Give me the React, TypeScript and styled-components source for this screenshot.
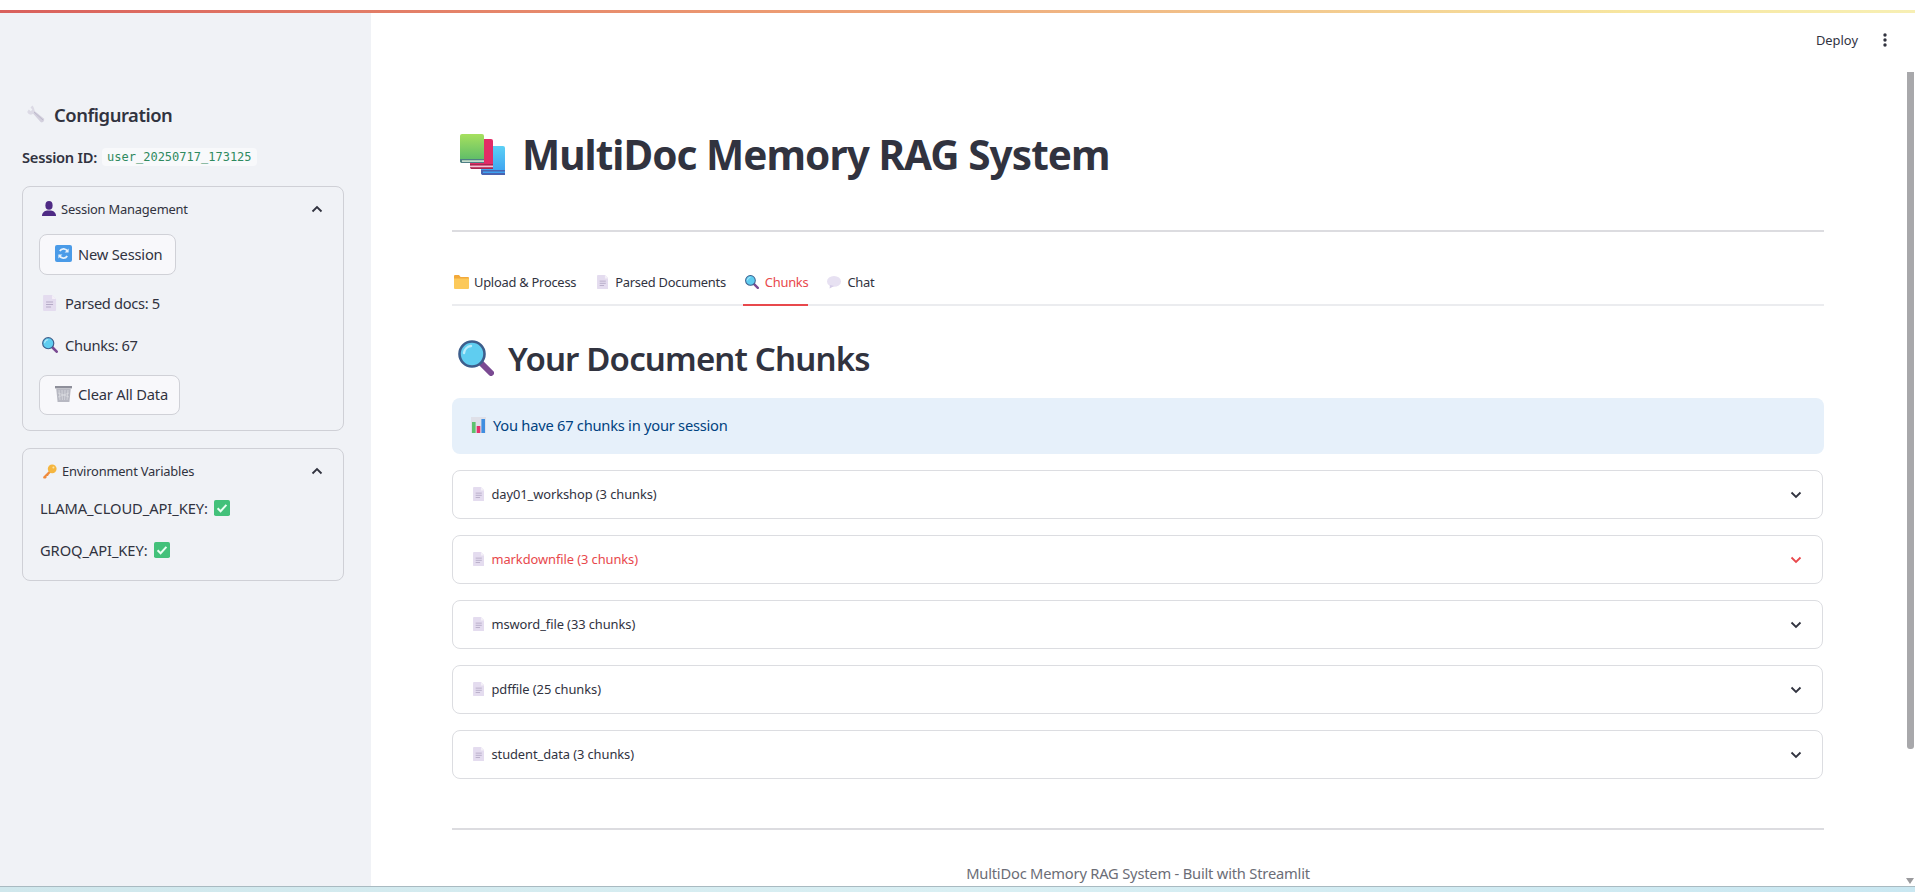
import React from "react";
import styled, { createGlobalStyle } from "styled-components";

const FONT = `"Noto Sans", "Lato", sans-serif`;

const Global = createGlobalStyle`
  html, body { margin: 0; padding: 0; height: 100%; overflow: hidden; background: #fff; }
  body { font-family: ${FONT}; color: #31333f; }
  * { box-sizing: border-box; }
`;

const Root = styled.div`
  height: 892px;
  display: flex;
  flex-direction: column;
  overflow: hidden;
`;
const TopGap = styled.div`height: 10px; background: #fff; flex: none;`;
const Decoration = styled.div`
  height: 3px;
  flex: none;
  background: linear-gradient(90deg, #d9605c 0%, #ec9a72 40%, #f7e6a0 85%, #f7efb4 100%);
`;
const Body = styled.div`flex: 1; display: flex; min-height: 0; position: relative;`;
const BottomStrip = styled.div`
  height: 6px;
  flex: none;
  border-top: 1px solid #a9bac1;
  background: linear-gradient(90deg, #cfe7ec, #d9eff3 50%, #c9e7f1);
`;

const Sidebar = styled.aside`
  width: 371px;
  flex: none;
  background: #f0f2f6;
  padding: 85px 27px 0 22px;
`;
const ConfigHeading = styled.h3`
  margin: 0;
  height: 32px;
  display: flex;
  align-items: center;
  gap: 8px;
  padding-left: 5px;
  font-size: 18.4px;
  font-weight: 600;
  letter-spacing: -0.45px;
  color: #31333f;
`;
const SessionRow = styled.div`
  margin-top: 17px;
  height: 20px;
  display: flex;
  align-items: center;
  gap: 5px;
  font-size: 14.7px;
  font-weight: 600;
  letter-spacing: -0.25px;
`;
const Code = styled.code`
  font-family: "DejaVu Sans Mono", monospace;
  font-size: 12px;
  font-weight: 400;
  letter-spacing: 0;
  color: #2f8a5f;
  background: #f8f9fb;
  border-radius: 4px;
  padding: 2px 5px;
`;
const Box = styled.section<{ $top: number; $bottom: number }>`
  margin-top: ${(p) => p.$top}px;
  width: 322px;
  border: 1px solid #cfd0d6;
  border-radius: 8px;
  padding: 0 16px ${(p) => p.$bottom}px;
`;
const BoxHeader = styled.div<{ $h: number }>`
  height: ${(p) => p.$h}px;
  margin: 0 -1px 0 3px;
  padding: 0 5px 2px 0;
  display: flex;
  align-items: center;
  gap: 5px;
  font-size: 12.9px;
  letter-spacing: -0.2px;
  color: #31333f;
`;
const Grow = styled.span`flex: 1;`;
const Button = styled.div<{ $w: number; $h: number; $top: number }>`
  margin-top: ${(p) => p.$top}px;
  width: ${(p) => p.$w}px;
  height: ${(p) => p.$h}px;
  display: flex;
  align-items: center;
  gap: 6px;
  padding: 0 0 2px 15px;
  border: 1px solid #d0d1d7;
  border-radius: 8px;
  background: #f8f8fb;
  font-size: 14.7px;
  letter-spacing: -0.2px;
  color: #31333f;
`;
const Para = styled.div<{ $top: number; $indent?: number; $ls?: number }>`
  margin-top: ${(p) => p.$top}px;
  height: 24px;
  display: flex;
  align-items: center;
  gap: 6px;
  padding: 0 0 2px ${(p) => p.$indent ?? 0}px;
  font-size: 14.7px;
  letter-spacing: ${(p) => p.$ls ?? 0}px;
  color: #31333f;
`;
const Slot = styled.span`
  flex: none;
  width: 18px;
  display: flex;
  align-items: center;
  justify-content: center;
`;

const Main = styled.main`
  flex: 1;
  min-width: 0;
  padding: 0 91px 0 81px;
  overflow: hidden;
`;
const Toolbar = styled.div`
  height: 54px;
  margin-right: -91px;
  padding-right: 28px;
  display: flex;
  align-items: center;
  justify-content: flex-end;
  gap: 25px;
  font-size: 12.9px;
  color: #31333f;
`;
const Title = styled.h1`
  margin: 57px 0 0;
  height: 60px;
  padding-left: 8px;
  display: flex;
  align-items: center;
  gap: 17px;
  font-size: 40.5px;
  font-weight: 700;
  letter-spacing: -0.95px;
  color: #31333f;
`;
const Rule = styled.hr<{ $top: number }>`
  margin: ${(p) => p.$top}px 0 0;
  border: 0;
  height: 2px;
  background: #dcdce0;
`;
const TabList = styled.div`
  margin-top: 34px;
  height: 40px;
  display: flex;
  gap: 17px;
  border-bottom: 2px solid #ebecef;
`;
const Tab = styled.div<{ $active?: boolean }>`
  height: 40px;
  padding-bottom: 6px;
  display: flex;
  align-items: center;
  gap: 4px;
  font-size: 12.9px;
  letter-spacing: -0.25px;
  color: ${(p) => (p.$active ? "#e8484c" : "#31333f")};
  border-bottom: 2px solid ${(p) => (p.$active ? "#e8484c" : "transparent")};
`;
const Heading = styled.h2`
  margin: 27px 0 0;
  height: 50px;
  padding-left: 6px;
  display: flex;
  align-items: center;
  gap: 14px;
  font-size: 33px;
  font-weight: 600;
  letter-spacing: -0.85px;
  color: #31333f;
`;
const Info = styled.div`
  margin-top: 15px;
  height: 56px;
  padding: 0 0 2px 19px;
  display: flex;
  align-items: center;
  gap: 7px;
  border-radius: 8px;
  background: #e6f0fa;
  color: #004280;
  font-size: 14.7px;
  letter-spacing: -0.25px;
`;
const ExpanderList = styled.div`
  margin-top: 16px;
  display: flex;
  flex-direction: column;
  gap: 16px;
`;
const Expander = styled.div<{ $hot?: boolean }>`
  height: 49px;
  margin-right: 1px;
  padding: 0 20px 2px 20px;
  display: flex;
  align-items: center;
  gap: 7px;
  border: 1px solid #dcdde1;
  border-radius: 8px;
  font-size: 12.9px;
  letter-spacing: -0.08px;
  color: ${(p) => (p.$hot ? "#e8484c" : "#31333f")};
`;
const ExpanderChevron = styled.span`
  display: flex;
  margin-bottom: -2px;
`;
const Footer = styled.div`
  margin-top: 31px;
  height: 24px;
  line-height: 24px;
  text-align: center;
  font-size: 14.7px;
  letter-spacing: -0.2px;
  color: #6b6d76;
`;
const ScrollThumb = styled.div`
  position: absolute;
  right: 1px;
  top: 59px;
  width: 7px;
  height: 677px;
  background: #a8a8ab;
  border-radius: 0 0 3px 3px;
`;
const ScrollArrow = styled.div`
  position: absolute;
  right: 1px;
  bottom: 2px;
  width: 0;
  height: 0;
  border-left: 4px solid transparent;
  border-right: 4px solid transparent;
  border-top: 6px solid #9a9a9d;
`;
const Svg = styled.svg`flex: none; display: block;`;

type IP = { s?: number };
const Doc = ({ s = 16 }: IP) => (
  <Svg width={s * 0.82} height={s} viewBox="0 0 13 16">
    <path d="M1 0h8l4 4v11a1 1 0 0 1-1 1H1a1 1 0 0 1-1-1V1a1 1 0 0 1 1-1z" fill="#e4dcef" />
    <path d="M9 0l4 4H9z" fill="#f4f0f8" />
    <path d="M3 7h7M3 9.5h7M3 12h5" stroke="#b5aac6" strokeWidth="1" />
  </Svg>
);
const Mag = ({ s = 16 }: IP) => (
  <Svg width={s} height={s} viewBox="0 0 36 36">
    <path d="M22 22l11 11" stroke="#7a4a92" strokeWidth="6" strokeLinecap="round" />
    <circle cx="14" cy="14" r="12.5" fill="#5fcdf0" stroke="#3d5e8c" strokeWidth="2.6" />
    <path d="M6 13a8 8 0 0 1 7-7" stroke="#b9ecfb" strokeWidth="2.4" fill="none" strokeLinecap="round" />
  </Svg>
);
const Wrench = () => (
  <Svg width={19} height={19} viewBox="0 0 19 19">
    <path d="M6.6 5.2L16.8 13.6a2.4 2.4 0 0 1-3.2 3.4L4.9 7.2z" fill="#d3d0dd" />
    <path d="M5.4 0.4L3.5 2.6l1.9 2-1.6 1.6-2-1.8L0.4 6.6c-.1 1.2.9 2.6 2.5 3 1.3.3 2.6-.1 3.6-1 1-1 1.4-2.4 1-3.7C7.1 3 6.2 1 5.4.4z" fill="#dcdae5" />
    <path d="M7 7l9 8" stroke="#bdb9cc" strokeWidth="1" />
  </Svg>
);
const Person = () => (
  <Svg width={14} height={15} viewBox="0 0 14 15">
    <ellipse cx="7" cy="4.4" rx="3.6" ry="4.4" fill="#4e2a84" />
    <path d="M0 15c0-3.6 2.4-5 5-5.6h4c2.6.6 5 2 5 5.6z" fill="#4e2a84" />
  </Svg>
);
const Refresh = () => (
  <Svg width={17} height={17} viewBox="0 0 17 17">
    <rect width="17" height="17" rx="2" fill="#4a9be8" />
    <path d="M12.6 6.6A4.4 4.4 0 0 0 4.8 6M4.4 10.4A4.4 4.4 0 0 0 12.2 11" stroke="#e6f1fb" strokeWidth="1.8" fill="none" />
    <path d="M13.6 3.4v4h-4zM3.4 13.6v-4h4z" fill="#e6f1fb" />
  </Svg>
);
const Trash = () => (
  <Svg width={17} height={16} viewBox="0 0 17 16">
    <rect x="0" y="0" width="17" height="2.4" fill="#8e8f9a" />
    <path d="M1.2 2.4h14.6L14.4 16H2.6z" fill="#b7b8c2" />
    <path d="M4 4l1 10M7 4l.4 10M10 4l-.4 10M13 4l-1 10M3 7l11 4M14 7L3 11" stroke="#d9dae0" strokeWidth=".8" />
  </Svg>
);
const Key = () => (
  <Svg width={15} height={15} viewBox="0 0 15 15">
    <path d="M8 6L1 13l.6 1.6h2L4.6 13.4V12h1.4l.8-1.4 2-2z" fill="#ef8a3c" />
    <circle cx="10.2" cy="4.8" r="4.4" fill="#f5b63f" />
    <circle cx="11.4" cy="3.6" r="1" fill="#fbe3a6" />
  </Svg>
);
const Check = () => (
  <Svg width={16} height={16} viewBox="0 0 16 16">
    <rect width="16" height="16" rx="1.8" fill="#43c17a" />
    <path d="M3.6 8.2l3 3 5.8-6.4" stroke="#eafff3" strokeWidth="2" fill="none" />
  </Svg>
);
const Books = () => (
  <Svg width={45} height={41} viewBox="0 0 45 41">
    <defs>
      <linearGradient id="bkG" x1="0" y1="0" x2="0" y2="1"><stop offset="0" stopColor="#a6e05e" /><stop offset="1" stopColor="#56b96a" /></linearGradient>
      <linearGradient id="bkB" x1="0" y1="0" x2="0" y2="1"><stop offset="0" stopColor="#5cd0f5" /><stop offset="1" stopColor="#3b9df0" /></linearGradient>
    </defs>
    <path d="M21 12h22a2 2 0 0 1 2 2v27H23a2 2 0 0 1-2-2z" fill="url(#bkB)" />
    <path d="M21 36h24v1.6H23v1.4h22v2H22.4L21 39.6z" fill="#4a63b0" />
    <path d="M10 5h21a2 2 0 0 1 2 2v28H12a2 2 0 0 1-2-2z" fill="#e22c66" />
    <path d="M10 30h23v1.6H12v1.6h21V35H11.4L10 33.4z" fill="#a8274f" />
    <path d="M10 31.6h23v1.6H10z" fill="#f3c5d5" />
    <path d="M0 2a2 2 0 0 1 2-2h20a2 2 0 0 1 2 2v27H2a2 2 0 0 1-2-2z" fill="url(#bkG)" />
    <path d="M0 25h24v1.6H2v1.2h22V29H1.4L0 27.4z" fill="#4e7f85" />
    <path d="M2 26.4h22v1.4H2z" fill="#dfe7e4" />
  </Svg>
);
const Folder = () => (
  <Svg width={15} height={14} viewBox="0 0 15 14">
    <path d="M0 1a1 1 0 0 1 1-1h4l1.6 2H14a1 1 0 0 1 1 1v2H0z" fill="#f3a93a" />
    <path d="M0 3.4h15V13a1 1 0 0 1-1 1H1a1 1 0 0 1-1-1z" fill="#fcc95a" />
  </Svg>
);
const Speech = () => (
  <Svg width={14} height={13} viewBox="0 0 14 13">
    <ellipse cx="7" cy="5.4" rx="7" ry="5.4" fill="#e7e1f2" />
    <path d="M3 9l-.4 3.6L7 10z" fill="#d6cde8" />
  </Svg>
);
const Bars = () => (
  <Svg width={15} height={16} viewBox="0 0 15 16">
    <rect width="15" height="16" fill="#dfe0e8" />
    <rect x="1" y="5" width="3.6" height="11" fill="#5ec26e" />
    <rect x="5.7" y="9" width="3.6" height="7" fill="#e5306c" />
    <rect x="10.4" y="2" width="3.6" height="14" fill="#3f8ee0" />
  </Svg>
);
const Chevron = ({ up, color = "#31333f" }: { up?: boolean; color?: string }) => (
  <Svg width={12} height={8} viewBox="0 0 12 8">
    <path d={up ? "M1.5 6.5L6 2l4.5 4.5" : "M1.5 1.5L6 6l4.5-4.5"} stroke={color} strokeWidth="1.8" fill="none" />
  </Svg>
);
const Kebab = () => (
  <Svg width={4} height={14} viewBox="0 0 4 14">
    <circle cx="2" cy="2" r="1.7" fill="#31333f" />
    <circle cx="2" cy="7" r="1.7" fill="#31333f" />
    <circle cx="2" cy="12" r="1.7" fill="#31333f" />
  </Svg>
);

const docs = [
  { name: "day01_workshop (3 chunks)" },
  { name: "markdownfile (3 chunks)", hot: true },
  { name: "msword_file (33 chunks)" },
  { name: "pdffile (25 chunks)" },
  { name: "student_data (3 chunks)" },
];

export default function App() {
  return (
    <Root>
      <Global />
      <TopGap />
      <Decoration />
      <Body>
        <Sidebar>
          <ConfigHeading><Wrench />Configuration</ConfigHeading>
          <SessionRow>Session ID:<Code>user_20250717_173125</Code></SessionRow>
          <Box $top={19} $bottom={15}>
            <BoxHeader $h={45}><Person />Session Management<Grow /><Chevron up /></BoxHeader>
            <Button $w={137} $h={41} $top={2}><Refresh />New Session</Button>
            <Para $top={17} $indent={2} $ls={-0.33}><Slot><Doc /></Slot>Parsed docs: 5</Para>
            <Para $top={18} $indent={2} $ls={-0.33}><Slot><Mag /></Slot>Chunks: 67</Para>
            <Button $w={141} $h={40} $top={17}><Trash />Clear All Data</Button>
          </Box>
          <Box $top={17} $bottom={17}>
            <BoxHeader $h={46}><Key />Environment Variables<Grow /><Chevron up /></BoxHeader>
            <Para $top={2} $indent={1} $ls={-0.08}>LLAMA_CLOUD_API_KEY:<Check /></Para>
            <Para $top={18} $indent={1} $ls={-0.08}>GROQ_API_KEY:<Check /></Para>
          </Box>
        </Sidebar>
        <Main>
          <Toolbar>Deploy<Kebab /></Toolbar>
          <Title><Books />MultiDoc Memory RAG System</Title>
          <Rule $top={46} />
          <TabList>
            <Tab><Slot><Folder /></Slot>Upload &amp; Process</Tab>
            <Tab><Slot><Doc s={14} /></Slot>Parsed Documents</Tab>
            <Tab $active><Slot><Mag s={14} /></Slot>Chunks</Tab>
            <Tab><Slot><Speech /></Slot>Chat</Tab>
          </TabList>
          <Heading><Mag s={36} />Your Document Chunks</Heading>
          <Info><Bars />You have 67 chunks in your session</Info>
          <ExpanderList>
            {docs.map((d) => (
              <Expander key={d.name} $hot={d.hot}>
                <Doc s={14} />{d.name}<Grow />
                <ExpanderChevron><Chevron color={d.hot ? "#e8484c" : "#31333f"} /></ExpanderChevron>
              </Expander>
            ))}
          </ExpanderList>
          <Rule $top={49} />
          <Footer>MultiDoc Memory RAG System - Built with Streamlit</Footer>
        </Main>
        <ScrollThumb />
        <ScrollArrow />
      </Body>
      <BottomStrip />
    </Root>
  );
}
